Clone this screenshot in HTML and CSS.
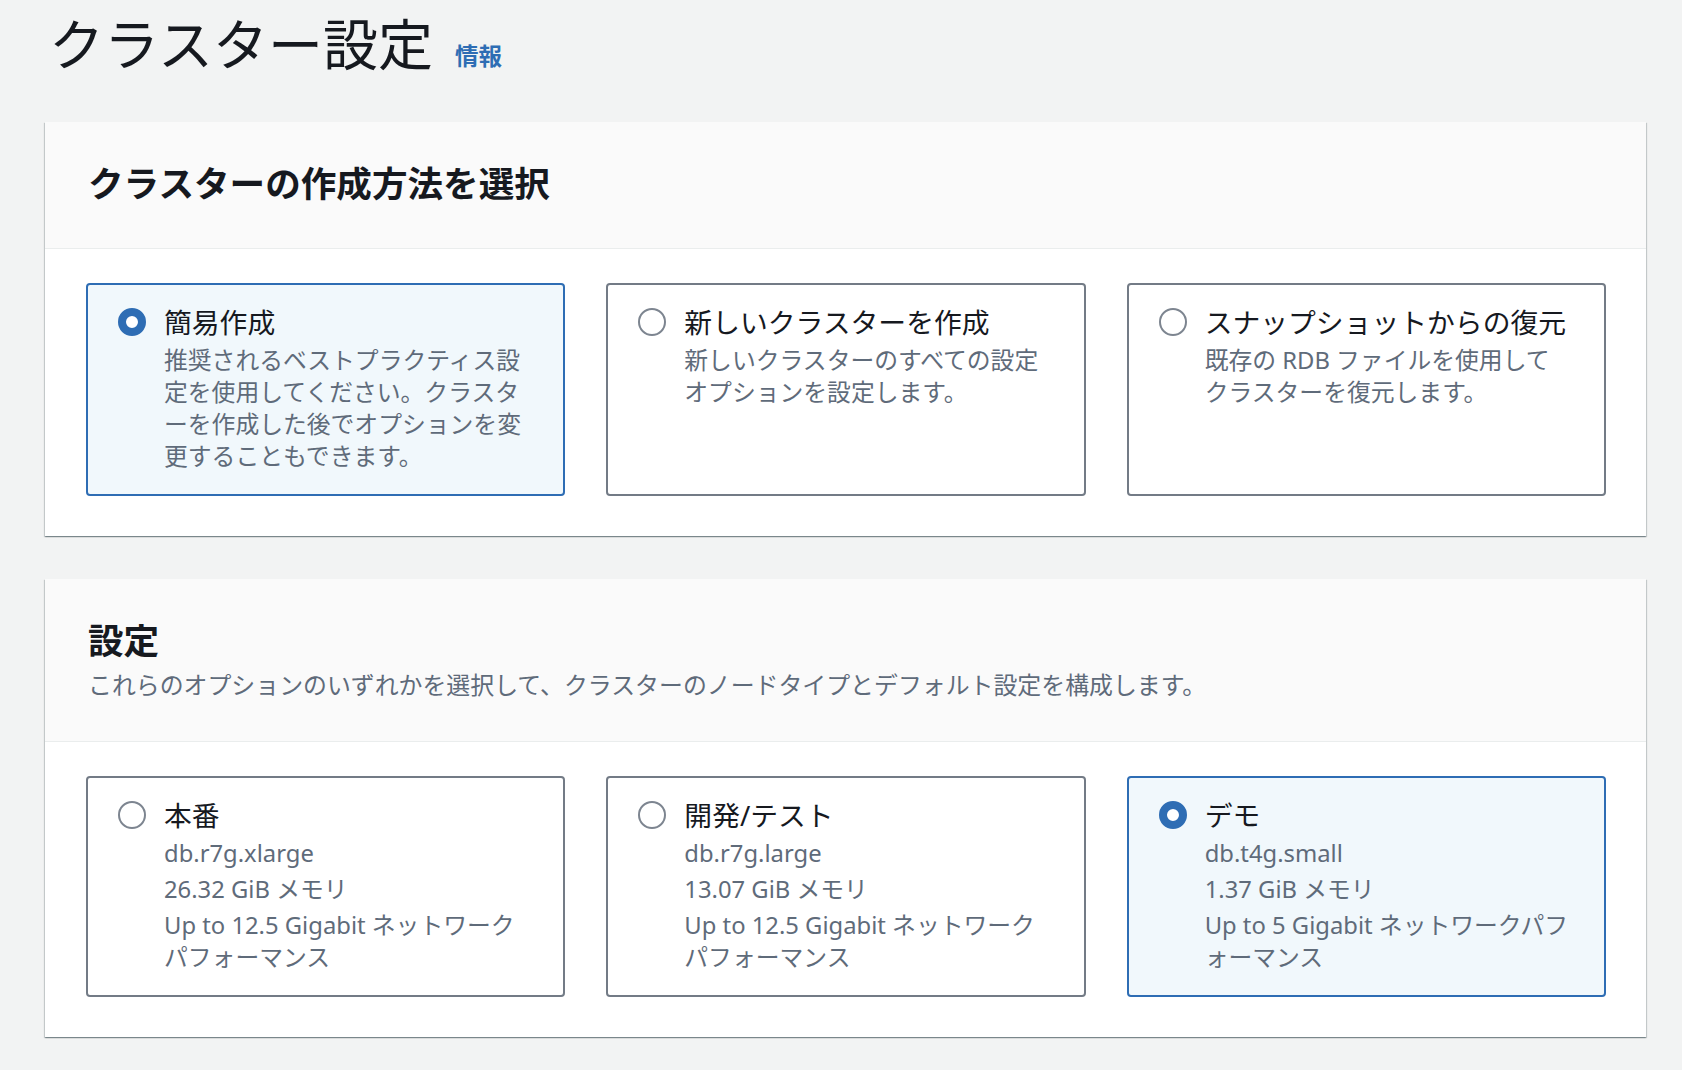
FILE: index.html
```html
<!DOCTYPE html>
<html lang="ja">
<head>
<meta charset="utf-8">
<title>クラスター設定</title>
<link rel="stylesheet" href="styles.css">
</head>
<body>
<div class="page">
  <div class="page-header">
    <h1 class="page-title">クラスター設定</h1>
    <a class="info-link" href="#">情報</a>
  </div>

  <section class="panel">
    <div class="panel-header">
      <h2 class="panel-title">クラスターの作成方法を選択</h2>
    </div>
    <div class="panel-body">
      <div class="tiles">
        <label class="tile tile-selected">
          <span class="radio radio-checked"></span>
          <span class="tile-content">
            <span class="tile-title">簡易作成</span>
            <span class="tile-desc">推奨されるベストプラクティス設<br>定を使用してください。クラスタ<br>ーを作成した後でオプションを変<br>更することもできます。</span>
          </span>
        </label>
        <label class="tile">
          <span class="radio"></span>
          <span class="tile-content">
            <span class="tile-title">新しいクラスターを作成</span>
            <span class="tile-desc">新しいクラスターのすべての設定<br>オプションを設定します。</span>
          </span>
        </label>
        <label class="tile">
          <span class="radio"></span>
          <span class="tile-content">
            <span class="tile-title">スナップショットからの復元</span>
            <span class="tile-desc">既存の RDB ファイルを使用して<br>クラスターを復元します。</span>
          </span>
        </label>
      </div>
    </div>
  </section>

  <section class="panel">
    <div class="panel-header panel-header-desc">
      <h2 class="panel-title">設定</h2>
      <p class="panel-desc">これらのオプションのいずれかを選択して、クラスターのノードタイプとデフォルト設定を構成します。</p>
    </div>
    <div class="panel-body">
      <div class="tiles">
        <label class="tile">
          <span class="radio"></span>
          <span class="tile-content">
            <span class="tile-title">本番</span>
            <span class="spec-list">
              <span class="spec">db.r7g.xlarge</span>
              <span class="spec">26.32 GiB メモリ</span>
              <span class="spec">Up to 12.5 Gigabit ネットワーク<br>パフォーマンス</span>
            </span>
          </span>
        </label>
        <label class="tile">
          <span class="radio"></span>
          <span class="tile-content">
            <span class="tile-title">開発/テスト</span>
            <span class="spec-list">
              <span class="spec">db.r7g.large</span>
              <span class="spec">13.07 GiB メモリ</span>
              <span class="spec">Up to 12.5 Gigabit ネットワーク<br>パフォーマンス</span>
            </span>
          </span>
        </label>
        <label class="tile tile-selected">
          <span class="radio radio-checked"></span>
          <span class="tile-content">
            <span class="tile-title">デモ</span>
            <span class="spec-list">
              <span class="spec">db.t4g.small</span>
              <span class="spec">1.37 GiB メモリ</span>
              <span class="spec">Up to 5 Gigabit ネットワークパフ<br>ォーマンス</span>
            </span>
          </span>
        </label>
      </div>
    </div>
  </section>
</div>
</body>
</html>
```

FILE: styles.css
```css
html, body {
  margin: 0;
  padding: 0;
}

body {
  background: #f2f3f3;
  color: #16191f;
  font-family: "Noto Sans", "Noto Sans CJK JP", sans-serif;
  line-break: loose;
}

.page {
  padding: 0 36px 40px 45px;
}

.page-header {
  display: flex;
  align-items: baseline;
  gap: 22px;
  height: 122px;
  box-sizing: border-box;
  padding: 10px 0 0 4px;
}

.page-title {
  margin: 0;
  font-size: 55px;
  line-height: 67px;
  font-weight: 400;
  color: #16191f;
}

.info-link {
  font-size: 23.5px;
  font-weight: 700;
  color: #2e6db4;
  text-decoration: none;
}

.panel {
  background: #ffffff;
  box-shadow: 0 1px 1px 0 rgba(0, 28, 36, 0.3),
              1px 1px 1px 0 rgba(0, 28, 36, 0.15),
              -1px 1px 1px 0 rgba(0, 28, 36, 0.15);
  margin-bottom: 43px;
}

.panel-header {
  background: #fafafa;
  border-bottom: 1px solid #eaeded;
  padding: 39px 40px 43px 43px;
}

.panel-header-desc {
  padding-bottom: 40px;
}

.panel-title {
  margin: 0;
  font-size: 35.6px;
  line-height: 44px;
  font-weight: 700;
  color: #16191f;
}

.panel-desc {
  margin: 7px 0 0;
  font-size: 23.9px;
  line-height: 32px;
  color: #5f6b7a;
}

.panel-body {
  padding: 34px 40px 40px 41px;
}

.tiles {
  display: grid;
  grid-template-columns: repeat(3, 1fr);
  gap: 41px;
}

.tile {
  display: flex;
  align-items: flex-start;
  gap: 18px;
  border: 2px solid #737b86;
  border-radius: 4px;
  background: #ffffff;
  padding: 19px 12px 22px 30px;
  cursor: pointer;
}

.tile-selected {
  border-color: #2e6db4;
  background: #f1f8fc;
}

.radio {
  flex: none;
  box-sizing: border-box;
  width: 28px;
  height: 28px;
  margin-top: 4px;
  border-radius: 50%;
  border: 2px solid #7d8590;
  background: #ffffff;
}

.radio-checked {
  border: 8px solid #2e6db4;
}

.tile-content {
  display: flex;
  flex-direction: column;
  min-width: 0;
}

.tile-title {
  font-size: 27.8px;
  line-height: 36px;
  color: #16191f;
}

.tile-desc {
  margin-top: 4px;
  font-size: 23.8px;
  line-height: 32px;
  color: #5f6b7a;
  white-space: nowrap;
}

.spec-list {
  display: flex;
  flex-direction: column;
  gap: 4px;
  margin-top: 4px;
}

.spec {
  font-size: 23.8px;
  line-height: 32px;
  color: #5f6b7a;
  white-space: nowrap;
}
```
